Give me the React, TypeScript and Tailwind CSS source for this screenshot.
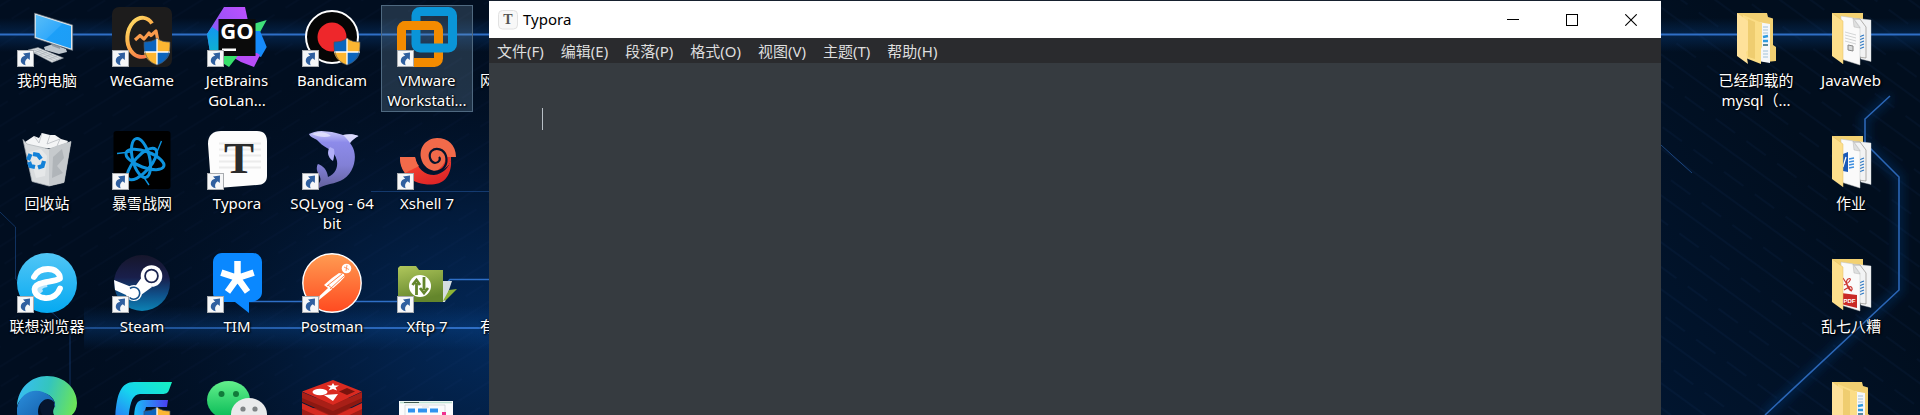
import type { ReactNode } from "react";

type Shortcut = {
  id: string;
  lines: string[];
  art: ReactNode;
  badge?: boolean;
  selected?: boolean;
};

function Art({ children, badge }: { children: ReactNode; badge?: boolean }) {
  return (
    <svg viewBox="0 0 60 60" className="size-[60px] shrink-0" aria-hidden="true">
      {children}
      {badge && (
        <g>
          <rect x="0.5" y="43.5" width="16" height="16" fill="#f6f7f8" stroke="#a9acb0" />
          <path d="M6 46.5L13 45.5L12.8 53L10.7 51.2C7.8 53.2 7.6 55.6 8.6 58.2C5.2 57.6 3.4 55.6 3.8 53C4.2 50.4 6 49.4 8.2 48.8Z" fill="#2f5f9f" />
        </g>
      )}
    </svg>
  );
}

function Shield() {
  return (
    <g>
      <path d="M45 31C42 34 37 35 32 35V45H45Z" fill="#0b64bd" />
      <path d="M45 31C48 34 53 35 58 35V45H45Z" fill="#fcb632" />
      <path d="M32 45C33 51 38 56 45 58V45Z" fill="#fcb632" />
      <path d="M58 45C57 51 52 56 45 58V45Z" fill="#0b64bd" />
      <path d="M45 31V58M32 45H58" stroke="#fff" strokeWidth="1.3" />
      <path d="M45 31C42 34 37 35 32 35C31.500 46 35 55 45 58C55 55 58.500 46 58 35C53 35 48 34 45 31Z" fill="none" stroke="#4d5257" strokeWidth="0.7" />
    </g>
  );
}

const pc = (
  <>
    <defs>
      <linearGradient id="pcScreen" x1="0" y1="0" x2="1" y2="1">
        <stop offset="0" stopColor="#58bdf8" />
        <stop offset="0.5" stopColor="#33aafb" />
        <stop offset="0.52" stopColor="#1c9ff8" />
        <stop offset="1" stopColor="#1d9df5" />
      </linearGradient>
    </defs>
    <path d="M27 40L36 37L49 42L50 45L42 47L28 43Z" fill="#bfc7ce" />
    <path d="M34 34L44 38L43 42L35 39Z" fill="#8f9aa4" />
    <path d="M17.500 6L55.700 18V43.500L17.500 31Z" fill="#dfe6eb" stroke="#59636d" strokeWidth="0.6" />
    <path d="M18.800 7.800L54 19V41.500L18.800 30Z" fill="url(#pcScreen)" />
    <path d="M11 43L21 40.500L46.500 51L35 55.500Z" fill="#d9dde0" stroke="#8d959c" strokeWidth="0.5" />
    <path d="M14 44L38 54M17 43L41 53M19.500 42L44 52M17 46L25 43M22 48L30 45M27 50L35 47M32 52L40 49" stroke="#a3abb2" strokeWidth="0.6" />
  </>
);

const weGame = (
  <>
    <defs>
      <linearGradient id="wg" x1="0" y1="0" x2="0.6" y2="1">
        <stop offset="0" stopColor="#ffe36a" />
        <stop offset="0.5" stopColor="#fdb34c" />
        <stop offset="1" stopColor="#f97b4b" />
      </linearGradient>
    </defs>
    <rect width="60" height="60" rx="7" fill="#1d1c1c" />
    <path d="M40 16.500C36 10 28 8.500 21.500 15C14 23 13.500 36 19 44C23 49.500 29 51 34 49" fill="none" stroke="url(#wg)" strokeWidth="4" />
    <path d="M23 33L28 28.500L32 32L37 26L39 28.500L44 24L46 34" fill="none" stroke="#f99a4c" strokeWidth="3.200" strokeLinejoin="round" />
    <Shield />
  </>
);

const goLand = (
  <>
    <defs>
      <linearGradient id="goBlue" x1="0" y1="0" x2="0" y2="1">
        <stop offset="0" stopColor="#1297f0" />
        <stop offset="1" stopColor="#0cb7c9" />
      </linearGradient>
      <linearGradient id="goPurple" x1="0" y1="1" x2="1" y2="0">
        <stop offset="0" stopColor="#4a7cf6" />
        <stop offset="0.5" stopColor="#9a52f7" />
        <stop offset="1" stopColor="#c050ff" />
      </linearGradient>
    </defs>
    <path d="M17 0H38L41 14L30 30L12 44L4 52L0 27Z" fill="url(#goPurple)" />
    <path d="M0 27L5 20L14 26L14 45L4 51Z" fill="url(#goBlue)" />
    <path d="M59.700 13L46 17L46 38L52 27Z" fill="#3fe07a" />
    <path d="M48 24L53 24L59.700 40L54 50L42 46Z" fill="#168bfb" />
    <path d="M12 46H50L53 48L47 60L34 55L22 48Z" fill="#b84df8" />
    <path d="M6 50L14 46H33L22 60Z" fill="#37e06b" />
    <rect x="11.500" y="12" width="37" height="37" fill="#0b0b0b" />
    <text x="30" y="31.500" textAnchor="middle" fontFamily="Open Sans, sans-serif" fontWeight="700" fontSize="22" fill="#fff">GO</text>
    <rect x="15" y="41.500" width="14" height="2.500" fill="#fff" />
  </>
);

const bandicam = (
  <>
    <circle cx="30" cy="30" r="26" fill="#050505" stroke="#fff" strokeWidth="2" />
    <circle cx="30" cy="30" r="14.500" fill="#ee272b" />
    <Shield />
  </>
);

const vmware = (
  <>
    <defs>
      <clipPath id="vmCross">
        <rect x="0" y="12" width="30" height="11" />
      </clipPath>
    </defs>
    <rect x="4.500" y="18.500" width="37" height="37" rx="4" fill="none" stroke="#f38b00" strokeWidth="9" />
    <rect x="19" y="4.500" width="36.500" height="36.500" rx="4" fill="none" stroke="#0a95d8" strokeWidth="9" />
    <rect x="4.500" y="18.500" width="37" height="37" rx="4" fill="none" stroke="#f38b00" strokeWidth="9" clipPath="url(#vmCross)" />
  </>
);

const recycleBin = (
  <>
    <path d="M8 12L17 6L22 8L25 3L33 5L38 5L44 9L51 11L47 18L12 18Z" fill="#f4f5f6" />
    <path d="M17 6L22 13L25 3M33 5L30 14L43 9L40 16" stroke="#b9bdc1" strokeWidth="0.8" fill="none" />
    <path d="M6 9.500L10 14L32 19L54 11.500L47 52.500L32 56L15 51.500Z" fill="#d9dcde" stroke="#aeb3b7" strokeWidth="0.7" />
    <path d="M32 19L54 11.500L47 52.500L32 56Z" fill="#c6cacd" />
    <path d="M36 27L45 19L47 28L40 36L46 43L35 48Z" fill="#b0b5b9" />
    <path d="M12 22L24 19L30 26L28 46L19 48Z" fill="#e6e8e9" />
    <g transform="translate(-1 -3)" fill="none" stroke="#1381d8" strokeWidth="4.200">
      <path d="M12 33L14.500 27" />
      <path d="M17 27L22 28L25 32" />
      <path d="M28 34L26.500 39L22 40.500" />
      <path d="M19 40L14.500 39L13 35" />
    </g>
  </>
);

const battleNet = (
  <>
    <rect x="1.500" y="1" width="57" height="58" rx="3" fill="#000" />
    <g fill="none" stroke="#0d93de" strokeWidth="3">
      <ellipse cx="29" cy="28" rx="8.500" ry="20" transform="rotate(-14 29 28)" />
      <ellipse cx="33" cy="29.500" rx="20" ry="8" transform="rotate(20 33 29.500)" />
      <ellipse cx="30" cy="34" rx="8" ry="20" transform="rotate(42 30 34)" />
      <path d="M5 23.500L18 22M49.500 11L45 22M37 55L31 46" strokeWidth="1.400" />
    </g>
  </>
);

const typora = (
  <>
    <path d="M14 1H50C57 1 60 5 60 11V46C60 52 56 55 50 55L17 57.500C8 58 4 54 3.500 48L1 14C1 5 6 1 14 1Z" fill="#fdfdfd" />
    <path d="M12 13.500H54M12 19.500H54M12 25.500H54M12 31.500H54M12 37.500H54" stroke="#ececec" strokeWidth="1.800" />
    <text x="32" y="43" textAnchor="middle" fontFamily="Liberation Serif, serif" fontWeight="700" fontSize="45" fill="#2b2b2b">T</text>
  </>
);

const dolphin = (
  <>
    <defs>
      <linearGradient id="dol" x1="0" y1="0" x2="0" y2="1">
        <stop offset="0" stopColor="#c9c8fa" />
        <stop offset="0.2" stopColor="#8d8bea" />
        <stop offset="0.6" stopColor="#8280d6" />
        <stop offset="1" stopColor="#63619c" />
      </linearGradient>
    </defs>
    <path d="M7 4C11 2 17 0 25 1.500C32 2 37 4 41 5C46 4 52 4 56.500 6C53 8 50 10 48 13C53 19 54.500 28 51 37C47 48 38 52 28 54C23 55 19 57 17 58L15 55C20 51 19 48 16 43C14 39 15 35 16 34C21 36 25 39 26 47C33 44 36 38 35 31C34 26 31 21 25 18C21 16 18 13 15 10C12 8 8 7 7 4Z" fill="url(#dol)" />
    <path d="M28 17C25 21 25 27 31 31C32 27 33 23 32 19Z" fill="#b1aff7" />
    <path d="M41 5C46 4 52 4 56.500 6C53 8 50 10 48 13C46 10 44 8 41 5ZM10 4C17 1 25 2 29 6C23 8 16 7 10 4Z" fill="#eeeeff" opacity="0.700" />
  </>
);

const xshell = (
  <>
    <defs>
      <linearGradient id="xsBody" x1="0" y1="0" x2="0.700" y2="1">
        <stop offset="0" stopColor="#f4744f" />
        <stop offset="0.450" stopColor="#ee3a2d" />
        <stop offset="1" stopColor="#dd2427" />
      </linearGradient>
    </defs>
    <path d="M3 27H18C20 39 28 45 37 45C46 44 52 38 54 29C55 43 49 54 35 54.500C16 55 4 45 3 27Z" fill="url(#xsBody)" />
    <path d="M3 27H18C19 31 20 34 22 36L8 43C4 38 3 33 3 27Z" fill="#f26a4a" />
    <path d="M59 27C59 15 51 8 40 8C29 8.500 22 17 24 28C26 38 36 43 44 40C51 37 54 33 54 27Z" fill="#f26a4a" />
    <path d="M38 42C46 41 54 36 54 27H49C48 34 44 38 38 42Z" fill="#e8352b" />
    <path d="M21 22C21 35 29 43 38 42C47 41 51 34 49 26C47 19 39 17 34.500 21C31 25 33 32 38 33C42 33 44 29 42 27" fill="none" stroke="#04142d" strokeWidth="2.200" />
  </>
);

const lenovo = (
  <>
    <defs>
      <linearGradient id="lv" x1="0" y1="0" x2="0" y2="1">
        <stop offset="0" stopColor="#51c6f6" />
        <stop offset="1" stopColor="#05a9f1" />
      </linearGradient>
    </defs>
    <circle cx="30" cy="30" r="30" fill="url(#lv)" />
    <path d="M24 40C20 36 23 32 30 31" stroke="#b9e5fb" strokeWidth="6" fill="none" />
    <path d="M17 24C20 18 25 16 31 16C38 16 43 20 43 25.500C37 29 29 28 22 31C14 34 17 44 28 45C36 45.500 41 41 43 35.500" fill="none" stroke="#fff" strokeWidth="5.800" strokeLinecap="round" strokeLinejoin="round" />
  </>
);

const steam = (
  <>
    <defs>
      <linearGradient id="st" x1="0" y1="0" x2="0" y2="1">
        <stop offset="0" stopColor="#16162b" />
        <stop offset="0.400" stopColor="#191f4b" />
        <stop offset="0.700" stopColor="#0f4f88" />
        <stop offset="1" stopColor="#0c83b5" />
      </linearGradient>
    </defs>
    <circle cx="30" cy="30" r="28" fill="url(#st)" />
    <path d="M2 27L22 35L30 24L40 34L29 42L22 48L14 42L3 37Z" fill="#fff" />
    <circle cx="39.500" cy="23" r="10.800" fill="#fff" />
    <circle cx="39.500" cy="23" r="6.400" fill="#fff" stroke="#1a2450" strokeWidth="1.800" />
    <circle cx="22" cy="40" r="8" fill="#fff" />
    <path d="M18 35.500A6 6 0 1 1 17.500 44.500" fill="none" stroke="#14508a" strokeWidth="1.600" />
  </>
);

const tim = (
  <>
    <path d="M15 0H46C51 0 55 4 55 9V39C55 45 50 49 42 49V60L28 49H15C10 49 6 45 6 40V9C6 4 10 0 15 0Z" fill="#0a88ff" />
    <path d="M30.500 25V8M30.500 25L46.700 19.700M30.500 25L40.500 38.800M30.500 25L20.500 38.800M30.500 25L14.300 19.700" stroke="#fff" strokeWidth="6.500" />
  </>
);

const postman = (
  <>
    <defs>
      <linearGradient id="pm" x1="0" y1="0" x2="0" y2="1">
        <stop offset="0" stopColor="#ff9c52" />
        <stop offset="1" stopColor="#ff4a20" />
      </linearGradient>
    </defs>
    <circle cx="30" cy="30" r="29.200" fill="url(#pm)" stroke="#fff" strokeWidth="1.400" />
    <circle cx="44.500" cy="15.500" r="4.800" fill="#fff" />
    <path d="M42 14L47 16.500M45 12L44 18" stroke="#ff8448" strokeWidth="0.800" fill="none" />
    <path d="M37 20L42 21L42.500 24L38 29L28 38L17 47L17.500 43L26 35L22 32L30 25Z" fill="#fff" />
    <path d="M40 21L25 33M42 23L28 36M31 36L26 32" stroke="#ff7a40" strokeWidth="0.900" />
  </>
);

const xftp = (
  <>
    <defs>
      <linearGradient id="xf" x1="0" y1="0" x2="0.300" y2="1">
        <stop offset="0" stopColor="#b0c75c" />
        <stop offset="1" stopColor="#64862c" />
      </linearGradient>
    </defs>
    <path d="M44 28L55 28L48 49H44Z" fill="#d5dde0" />
    <path d="M46 48L52 37L60 36L49 47Z" fill="#8db436" />
    <path d="M1 15L3 13H19L22 17H46V49H1Z" fill="url(#xf)" />
    <circle cx="23" cy="33" r="11" fill="#fff" />
    <path d="M19.500 42V30M15.500 32L19.500 27L23 32M27 24V37M23 35L27 40L31 35" fill="none" stroke="#64862c" strokeWidth="2.800" />
  </>
);

const edge = (
  <>
    <defs>
      <linearGradient id="edTop" x1="0" y1="0.300" x2="1" y2="0.500">
        <stop offset="0" stopColor="#38bdf5" />
        <stop offset="0.500" stopColor="#34c5bd" />
        <stop offset="1" stopColor="#6be45a" />
      </linearGradient>
      <linearGradient id="edMid" x1="0" y1="0" x2="0.800" y2="1">
        <stop offset="0" stopColor="#2b8fdc" />
        <stop offset="1" stopColor="#0d4f9b" />
      </linearGradient>
    </defs>
    <path d="M0 30C1 12 14 0 30 0C48 0 60 13 60 27C60 37 53 43 43 42C35 41 35 35 38 30C39 22 30 16 20 16C10 17 2 23 0 30Z" fill="url(#edTop)" />
    <path d="M0 32C3 17 16 12 26 16C34 19 39 25 38 32C36 20 21 22 21 36C22 47 30 54 42 55C20 66 -2 52 0 32Z" fill="url(#edMid)" />
    <path d="M23 31C24 24 31 20 37 26C38 30 35 33 36 38L28 42C24 38 23 35 23 31Z" fill="#06152e" />
  </>
);

const feather = (
  <>
    <defs>
      <linearGradient id="ffTop" x1="0" y1="1" x2="1" y2="0">
        <stop offset="0" stopColor="#2a72f7" />
        <stop offset="0.500" stopColor="#16d3ef" />
        <stop offset="1" stopColor="#16f2c0" />
      </linearGradient>
      <linearGradient id="ffMid" x1="0" y1="0" x2="1" y2="0">
        <stop offset="0" stopColor="#18bff7" />
        <stop offset="1" stopColor="#4b3ef2" />
      </linearGradient>
    </defs>
    <path d="M3 46C4 20 8 6 22 6H60L57 14C56 17 54 18 50 18H28C20 19 18 26 16 46Z" fill="url(#ffTop)" />
    <path d="M22 46C22 31 24 24 31 24H56L55 31H34L30 46Z" fill="url(#ffMid)" />
    <Shield />
  </>
);

const weChat = (
  <>
    <defs>
      <linearGradient id="wc" x1="0" y1="0" x2="0" y2="1">
        <stop offset="0" stopColor="#63f08c" />
        <stop offset="1" stopColor="#06b955" />
      </linearGradient>
    </defs>
    <ellipse cx="21.500" cy="24" rx="21.500" ry="19" fill="url(#wc)" />
    <circle cx="14.500" cy="18" r="3" fill="#117a3a" />
    <circle cx="29" cy="18" r="3" fill="#117a3a" />
    <ellipse cx="42" cy="38" rx="18" ry="16" fill="#e9eaeb" />
    <circle cx="36" cy="33" r="2.600" fill="#7f8385" />
    <circle cx="48" cy="33" r="2.600" fill="#7f8385" />
  </>
);

const redis = (
  <>
    <path d="M0 32V42L31 56L60 42V32Z" fill="#a01d16" />
    <path d="M0 27L31 41L60 27V33L31 47L0 33Z" fill="#d62a20" />
    <path d="M0 22V26L31 40L60 26V22Z" fill="#8c1811" />
    <path d="M0 16V22L31 35L60 22V16L31 29Z" fill="#a81f17" />
    <path d="M0 15.500L31 4L60 15.500L31 29Z" fill="#da2a20" />
    <ellipse cx="18" cy="16" rx="7.500" ry="3.200" fill="#fff" />
    <path d="M31 7L32.500 9.500L37 9.500L33.500 11.500L35 14.500L31 13L26.500 14.500L28.500 11.500L25 9.500L29.500 9.500Z" fill="#fff" />
    <path d="M22 19L36 18L31 25Z" fill="#fff" />
    <path d="M37 15.500L45 12L53 15.500L45 19Z" fill="#7a130d" />
  </>
);

const diagram = (
  <>
    <rect x="2" y="25" width="54" height="35" fill="#fbfcfd" />
    <path d="M3 26.500H55" stroke="#b9dfd0" strokeWidth="1.500" />
    <path d="M7 26.500H22" stroke="#3f5950" strokeWidth="1" />
    <path d="M8 29H48V40H8ZM25 31H32" stroke="#c3cbd2" strokeWidth="0.600" fill="none" />
    <path d="M11 34.500H18M21 34.500H30M33 34.500H41" stroke="#2f93ef" strokeWidth="4" />
    <rect x="45" y="36" width="4" height="4" fill="#f0318f" />
  </>
);

function PaperFolder({ front }: { front: ReactNode }) {
  return (
    <>
      <path d="M11 6H42V20H11Z" fill="#f3d172" />
      <path d="M24 10L50 13V54.500L40 52Z" fill="#f2f3f4" stroke="#d2d4d6" strokeWidth="0.400" />
      <path d="M27 12H39L45 20V51L37 50" fill="none" stroke="#84817a" strokeWidth="0.600" />
      <path d="M38 30L43 28M38 33L43 31M38 36L43 34M38 39L43 37M38 42L43 40" stroke="#2b78c5" strokeWidth="1.200" />
      <path d="M20 9L32 11L39 20V58L20 52Z" fill="#fafafa" stroke="#bfc0c0" strokeWidth="0.500" />
      <path d="M32 11L33 20L39 21Z" fill="#dfe0e0" stroke="#aaa" strokeWidth="0.400" />
      {front}
      <path d="M11 6L22 14V57L11 49Z" fill="#fddf8c" />
      <path d="M11 6L22 14V57" fill="none" stroke="#e4bd60" strokeWidth="0.500" />
    </>
  );
}

const nestedFolder = (
  <>
    <path d="M11 6H41L42 10L47 11.500V38L50 40V54L40 55L11 48Z" fill="#f2d072" />
    <path d="M32 15L44 17V56L32 54Z" fill="#f5f7f8" />
    <path d="M37 20H42M37 23H42M37 26H42M37 44H42M37 47H42M37 50H42" stroke="#8db5cf" strokeWidth="0.800" />
    <path d="M37 30L42 29M37 34H42" stroke="#2e9adf" strokeWidth="2.400" />
    <path d="M37 38H42" stroke="#25657c" strokeWidth="1.500" />
    <path d="M17 8L36 16V40L35 42V57L17 50Z" fill="#fbdd86" />
    <path d="M22 12L29 15V52L22 50Z" fill="#efcd70" />
    <path d="M11 6L22 14V43L20 45L22 57L11 49Z" fill="#fee19a" />
  </>
);

const textSheet = (
  <PaperFolder
    front={
      <>
        <path d="M24 25L35 28M24 28L35 31M24 31L35 34M24 34L35 37" stroke="#c2c4c5" strokeWidth="0.700" />
        <path d="M27 38L32 39V44L27 43Z" fill="#d7d9da" stroke="#888" strokeWidth="1" />
      </>
    }
  />
);

const wordSheet = (
  <PaperFolder
    front={
      <>
        <path d="M22 24L27 22V42L22 41Z" fill="#1a59b8" />
        <path d="M22 37L25 27" stroke="#fff" strokeWidth="1.200" />
        <path d="M28 29L33 28M28 32L33 31M28 35L33 34M28 38L33 37" stroke="#3c8ee0" strokeWidth="1.300" />
      </>
    }
  />
);

const pdfSheet = (
  <PaperFolder
    front={
      <>
        <path d="M22 25L29 36C32 40 32 32 28 34L23 37M23 32C30 29 31 24 27 26C23 29 28 38 31 38" fill="none" stroke="#cc3630" strokeWidth="1.200" />
        <path d="M20 40L36 42V55L20 51Z" fill="#c92a26" />
        <text x="22.500" y="50" fontFamily="Liberation Sans, sans-serif" fontWeight="700" fontSize="6" fill="#fff">PDF</text>
      </>
    }
  />
);

const leftIcons: Shortcut[] = [
  { id: "pc", lines: ["我的电脑"], art: pc, badge: true },
  { id: "wegame", lines: ["WeGame"], art: weGame, badge: true },
  { id: "goland", lines: ["JetBrains", "GoLan..."], art: goLand, badge: true },
  { id: "bandicam", lines: ["Bandicam"], art: bandicam, badge: true },
  { id: "vmware", lines: ["VMware", "Workstati..."], art: vmware, badge: true, selected: true },
  { id: "bin", lines: ["回收站"], art: recycleBin },
  { id: "battlenet", lines: ["暴雪战网"], art: battleNet, badge: true },
  { id: "typora", lines: ["Typora"], art: typora, badge: true },
  { id: "sqlyog", lines: ["SQLyog - 64", "bit"], art: dolphin, badge: true },
  { id: "xshell", lines: ["Xshell 7"], art: xshell, badge: true },
  { id: "lenovo", lines: ["联想浏览器"], art: lenovo, badge: true },
  { id: "steam", lines: ["Steam"], art: steam, badge: true },
  { id: "tim", lines: ["TIM"], art: tim, badge: true },
  { id: "postman", lines: ["Postman"], art: postman, badge: true },
  { id: "xftp", lines: ["Xftp 7"], art: xftp, badge: true },
  { id: "edge", lines: [], art: edge },
  { id: "feather", lines: [], art: feather },
  { id: "wechat", lines: [], art: weChat },
  { id: "redis", lines: [], art: redis },
  { id: "diagram", lines: [], art: diagram },
];

const rightIcons: (Shortcut | null)[] = [
  { id: "mysql", lines: ["已经卸载的", "mysql（..."], art: nestedFolder },
  { id: "javaweb", lines: ["JavaWeb"], art: textSheet },
  null,
  { id: "homework", lines: ["作业"], art: wordSheet },
  null,
  { id: "misc", lines: ["乱七八糟"], art: pdfSheet },
  null,
  { id: "folder", lines: [], art: nestedFolder },
];

const menus = ["文件(F)", "编辑(E)", "段落(P)", "格式(O)", "视图(V)", "主题(T)", "帮助(H)"];

const labelText = "text-[15px] leading-5 text-white [text-shadow:1px_1px_2px_#000,0_0_2px_#000]";

function DesktopIcon({ item }: { item: Shortcut }) {
  return (
    <button
      type="button"
      aria-pressed={item.selected}
      className={`flex h-[107px] w-[92px] flex-col items-center gap-[3px] border pt-px ${
        item.selected ? "border-[#4f6980] bg-[#7a9ab5]/25" : "border-transparent"
      }`}
    >
      <Art badge={item.badge}>{item.art}</Art>
      <span className={`${labelText} whitespace-nowrap text-center`}>
        {item.lines.map((line) => (
          <span key={line} className="block">
            {line}
          </span>
        ))}
      </span>
    </button>
  );
}

function LeftWallpaper() {
  return (
    <svg className="absolute inset-0 h-full w-full" aria-hidden="true">
      <defs>
        <radialGradient id="glowL" gradientUnits="userSpaceOnUse" cx="500" cy="340" r="430" gradientTransform="translate(0 102) scale(1 0.700)">
          <stop offset="0" stopColor="#03295a" />
          <stop offset="0.450" stopColor="#021a3a" />
          <stop offset="1" stopColor="#010f22" stopOpacity="0" />
        </radialGradient>
        <linearGradient id="beam" x1="0" y1="0" x2="0" y2="1">
          <stop offset="0" stopColor="#0a4d9c" stopOpacity="0" />
          <stop offset="0.500" stopColor="#0a4d9c" stopOpacity="0.320" />
          <stop offset="1" stopColor="#0a4d9c" stopOpacity="0" />
        </linearGradient>
        <linearGradient id="beamFade" x1="0" y1="0" x2="1" y2="0">
          <stop offset="0" stopColor="#2f6fc6" stopOpacity="0.500" />
          <stop offset="1" stopColor="#2f6fc6" />
        </linearGradient>
        <pattern id="hatchL" width="34" height="34" patternUnits="userSpaceOnUse" patternTransform="rotate(-32)">
          <path d="M0 5H34M0 22H21" stroke="#2a68b0" strokeOpacity="0.060" />
        </pattern>
      </defs>
      <rect width="100%" height="100%" fill="url(#glowL)" />
      <rect width="100%" height="100%" fill="url(#hatchL)" />
      <rect y="18" width="100%" height="34" fill="url(#beam)" />
      <rect x="84" y="306" width="420" height="44" fill="url(#beam)" />
      <g fill="none" stroke="#2f6fc6">
        <path d="M0 34.500H489" strokeWidth="2" />
        <rect x="70" y="327" width="419" height="2" stroke="none" fill="url(#beamFade)" />
        <path d="M248 301.500H398M438 292L450 279.500H489" strokeWidth="1.500" />
        <path d="M371 191.500H489" strokeOpacity="0.400" />
        <path d="M0 212L15.500 227V279L70 329V415" stroke="#1a4b8c" strokeOpacity="0.600" />
      </g>
    </svg>
  );
}

function RightWallpaper() {
  return (
    <svg className="absolute inset-0 h-full w-full" aria-hidden="true">
      <defs>
        <pattern id="hatchR" width="38" height="38" patternUnits="userSpaceOnUse" patternTransform="rotate(36)">
          <path d="M0 6H38M0 26H24" stroke="#2a68b0" strokeOpacity="0.060" strokeWidth="2" />
        </pattern>
        <linearGradient id="sideR" x1="0" y1="1" x2="1" y2="0">
          <stop offset="0" stopColor="#01152f" />
          <stop offset="0.600" stopColor="#010e1e" />
        </linearGradient>
        <filter id="soft" x="-20%" y="-20%" width="140%" height="140%">
          <feGaussianBlur stdDeviation="5" />
        </filter>
      </defs>
      <rect width="100%" height="100%" fill="url(#sideR)" />
      <rect width="100%" height="100%" fill="url(#hatchR)" />
      <rect y="18" width="100%" height="34" fill="url(#beam)" />
      <path d="M229 96L204 119V143L238 177V290L104 415" fill="none" stroke="#0a4591" strokeOpacity="0.320" strokeWidth="9" filter="url(#soft)" />
      <g fill="none" stroke="#2b66b5">
        <path d="M0 34.500H259" stroke="#2f6fc6" strokeWidth="2" />
        <path d="M229 96L204 119V143L238 177V290L104 415" strokeWidth="1.600" />
        <path d="M0 145L31 173" strokeOpacity="0.600" />
      </g>
    </svg>
  );
}

export default function App() {
  return (
    <main className="flex h-screen overflow-hidden bg-[#010e20] font-['Noto_Sans','Noto_Sans_CJK_SC',sans-serif]">
      <section aria-label="桌面" className="relative w-[489px] shrink-0 overflow-hidden">
        <LeftWallpaper />
        <div className="relative flex gap-[7px] pl-px pt-[5px]">
          <div className="grid shrink-0 grid-cols-[repeat(5,92px)] gap-x-[3px] gap-y-4">
            {leftIcons.map((item) => (
              <DesktopIcon key={item.id} item={item} />
            ))}
          </div>
          <div className={`flex shrink-0 flex-col gap-[226px] pt-[65px] ${labelText}`}>
            <span>网</span>
            <span>有</span>
          </div>
        </div>
      </section>

      <section aria-label="Typora" className="flex min-w-0 flex-1 flex-col border-t border-[#16202e] bg-[#363b40]">
        <header className="flex h-[37px] shrink-0 items-center bg-white pr-px">
          <svg viewBox="0 0 20 20" className="ml-[9px] size-5" aria-hidden="true">
            <rect x="0.500" y="0.500" width="19" height="18.500" rx="4" fill="#f8f8f8" stroke="#e2e2e2" />
            <text x="10" y="14" textAnchor="middle" fontFamily="Liberation Serif, serif" fontWeight="700" fontSize="14" fill="#555">T</text>
          </svg>
          <h1 className="ml-[5px] flex-1 pb-px text-[15px] leading-5 text-black">Typora</h1>
          <button type="button" aria-label="最小化" className="flex h-full w-[59px] items-center justify-center">
            <svg viewBox="0 0 12 12" className="size-3">
              <path d="M0 5.500H12" stroke="#000" />
            </svg>
          </button>
          <button type="button" aria-label="最大化" className="flex h-full w-[59px] items-center justify-center">
            <svg viewBox="0 0 12 12" className="size-3">
              <rect x="0.500" y="0.500" width="11" height="11" fill="none" stroke="#000" />
            </svg>
          </button>
          <button type="button" aria-label="关闭" className="flex h-full w-[59px] items-center justify-center">
            <svg viewBox="0 0 12 12" className="size-3">
              <path d="M0.300 0.300L11.700 11.700M11.700 0.300L0.300 11.700" stroke="#000" strokeWidth="1.100" />
            </svg>
          </button>
        </header>
        <nav className="flex h-[25px] shrink-0 items-center gap-px overflow-hidden bg-[#2a2b2e]">
          {menus.map((menu) => (
            <button key={menu} type="button" className="whitespace-nowrap px-2 text-[15px] leading-5 text-[#dedede]">
              {menu}
            </button>
          ))}
        </nav>
        <div className="flex flex-1 pl-[53px] pt-[45px]">
          <span aria-hidden="true" className="h-[22px] w-px bg-[#b8bfc6]" />
          <textarea aria-label="正文" className="flex-1 resize-none bg-transparent text-base text-[#b8bfc6] outline-none" />
        </div>
      </section>

      <section aria-label="文件夹" className="relative w-[259px] shrink-0 overflow-hidden">
        <RightWallpaper />
        <div className="relative grid grid-cols-[repeat(2,92px)] justify-end gap-x-[3px] gap-y-4 pr-[23px] pt-[5px]">
          {rightIcons.map((item, i) => (item ? <DesktopIcon key={item.id} item={item} /> : <span key={i} />))}
        </div>
      </section>
    </main>
  );
}
